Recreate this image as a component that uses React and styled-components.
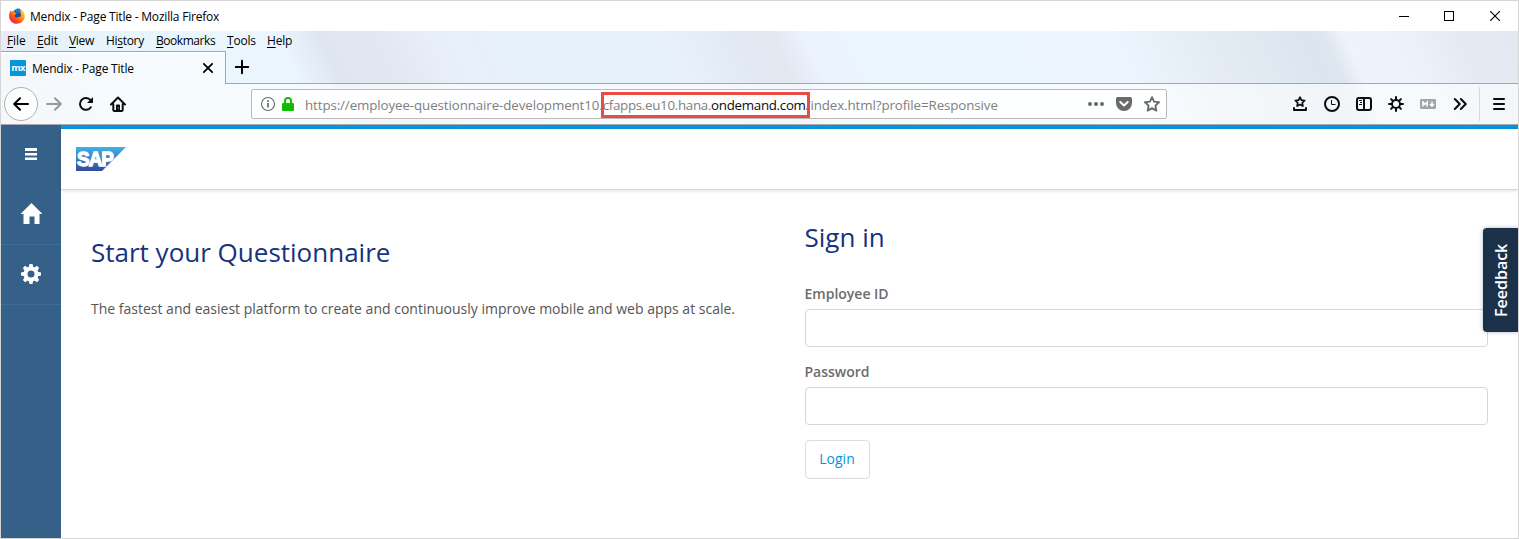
import React from "react";
import styled, { createGlobalStyle, css } from "styled-components";

const GlobalStyle = createGlobalStyle`
  *, *::before, *::after { box-sizing: border-box; }
  body { margin: 0; background: #fff; font-family: "Open Sans", "Liberation Sans", sans-serif; }
  button { font: inherit; margin: 0; padding: 0; background: none; border: 0; color: inherit; }
  svg { display: block; flex: none; }
`;

const Window = styled.div`
  width: 1519px;
  height: 539px;
  display: flex;
  flex-direction: column;
  border: 1px solid #d5d5d6;
  overflow: hidden;
  background: #fff;
`;

const TitleBar = styled.header`
  display: flex;
  align-items: center;
  height: 30px;
  padding-left: 8px;
  font-size: 12px;
  color: #000;
`;

const WindowTitle = styled.span`
  margin-left: 5px;
  white-space: nowrap;
  letter-spacing: -0.2px;
`;

const WindowControls = styled.div`
  display: flex;
  margin-left: auto;
`;

const WindowControl = styled.button`
  display: grid;
  place-items: center;
  width: ${(p) => p.$width || 46}px;
  height: 30px;
`;

const Chrome = styled.div`
  display: flex;
  flex-direction: column;
  height: 94px;
  border-bottom: 1px solid #a6a7b0;
  background: linear-gradient(
    65deg,
    #e8ecf4 0px,
    #e5edf6 50px,
    #e7f4fc 105px,
    #eaf6fe 240px,
    #ebf5fe 290px,
    #dfe6ef 325px,
    #e2e8f1 380px,
    #e8eff9 430px,
    #e6f2fb 520px,
    #e8f1fb 640px,
    #e2e9f3 700px,
    #e2e7f0 735px,
    #ecf3fd 765px,
    #eaf7fe 840px,
    #edf5fe 1040px,
    #e4ebf3 1130px,
    #dce5ee 1222px,
    #dfe6ef 1236px,
    #edf4fb 1254px,
    #ecf2f9 1310px,
    #e3eaf2 1360px,
    #e3e9f1 1413px
  );
`;

const MenuBar = styled.nav`
  display: flex;
  height: 20px;
  padding-left: 6px;
  font-size: 12px;
  line-height: 20px;
  color: #000;
`;

const MenuItem = styled.span`
  width: ${(p) => p.$width}px;
  white-space: nowrap;
  letter-spacing: ${(p) => p.$spacing}px;
  u { text-underline-offset: 2px; text-decoration-skip-ink: none; }
`;

const TabStrip = styled.div`
  display: flex;
  height: 33px;
`;

const Tab = styled.div`
  display: flex;
  align-items: center;
  width: 225px;
  padding: 0 9px;
  font-size: 12px;
  color: #000;
  border-top: 1px solid #a3a6ae;
  border-right: 1px solid #a3a6ae;
  background: linear-gradient(#ffffff 0 2px, rgba(255, 255, 255, 0.6) 2px);
`;

const TabTitle = styled.span`
  flex: 1;
  margin-left: 6px;
  white-space: nowrap;
  letter-spacing: -0.2px;
`;

const Favicon = styled.span`
  display: grid;
  place-items: center;
  width: 16px;
  height: 16px;
  border-radius: 1px;
  background: #0595db;
  color: #fff;
  font: 700 9.5px/14px "Open Sans", sans-serif;
  letter-spacing: -0.6px;
`;

const TabStripRest = styled.div`
  flex: 1;
  display: flex;
  align-items: center;
  padding-left: 8px;
  border-bottom: 1px solid #a3a6ae;
`;

const NavBar = styled.div`
  display: flex;
  align-items: center;
  height: 40px;
  padding-left: 3px;
  background: rgba(255, 255, 255, 0.6);
`;

const BackButton = styled.button`
  display: grid;
  place-items: center;
  width: 34px;
  height: 34px;
  border: 1px solid #aeb0b5;
  border-radius: 50%;
  background: rgba(255, 255, 255, 0.8);
`;

const ToolButton = styled.button`
  display: grid;
  place-items: center;
  width: ${(p) => p.$width || 32}px;
  height: 32px;
  color: ${(p) => p.$color || "#0c0c0d"};
`;

const UrlBar = styled.div`
  display: flex;
  align-items: center;
  width: 916px;
  height: 30px;
  margin-left: 117px;
  padding: 0 0 0 8px;
  border: 1px solid #b8babd;
  border-radius: 2px;
  background: rgba(255, 255, 255, 0.85);
`;

const Url = styled.span`
  flex: 1;
  margin-left: 5px;
  padding-top: 2px;
  font-size: 13.33px;
  line-height: 20px;
  white-space: nowrap;
  letter-spacing: -0.1px;
  color: #7e7e80;
`;

const UrlHighlight = styled.span`
  position: relative;
  letter-spacing: -0.3px;
  &::after {
    content: "";
    position: absolute;
    inset: -4px -4px -4px -2px;
    border: 3px solid #e84c47;
  }
`;

const UrlDomain = styled.span`
  color: #0c0c0d;
`;

const Tools = styled.div`
  display: flex;
  align-items: center;
  margin-left: auto;
  padding-right: 3px;
`;

const ToolDivider = styled.i`
  width: 1px;
  height: 34px;
  margin-left: 3px;
  margin-right: 3px;
  background: #d7dade;
`;

const Page = styled.div`
  position: relative;
  display: flex;
  flex: 1;
  min-height: 0;
`;

const Sidebar = styled.aside`
  display: flex;
  flex-direction: column;
  width: 60px;
  background: #356188;
  color: #fff;
`;

const SidebarItem = styled.a`
  display: grid;
  place-items: center;
  height: 60px;
  padding-bottom: 2px;
  ${(p) => p.$divided && css`
    padding-bottom: 1px;
    border-bottom: 1px solid #3f6d94;
  `}
`;

const Main = styled.main`
  flex: 1;
  border-top: 4px solid #0595db;
`;

const AppHeader = styled.div`
  display: flex;
  align-items: center;
  height: 61px;
  padding: 0 15px;
  border-bottom: 1px solid #d7d7d7;
  box-shadow: 0 1px 3px rgba(0, 0, 0, 0.12);
`;

const Columns = styled.div`
  display: grid;
  grid-template-columns: 713.5px 683.5px;
  padding-left: 30px;
`;

const Intro = styled.section`
  padding-top: 44px;
`;

const SignIn = styled.form`
  padding-top: 29px;
`;

const Heading = styled.h1`
  margin: 0;
  font-size: 26px;
  font-weight: 400;
  line-height: 37px;
  color: #16337b;
  white-space: nowrap;
`;

const Lead = styled.p`
  margin: 28px 0 0;
  font-size: 14px;
  line-height: 20px;
  color: #555;
  white-space: nowrap;
`;

const Label = styled.label`
  display: block;
  margin-top: ${(p) => p.$top}px;
  font-size: 14px;
  font-weight: 600;
  line-height: 20px;
  color: #6c6c6c;
`;

const Input = styled.input`
  display: block;
  width: 100%;
  height: 38px;
  margin-top: 5px;
  border: 1px solid #d7d7d7;
  border-radius: 4px;
  background: #fff;
`;

const LoginButton = styled.button`
  && {
    display: block;
    width: 65px;
    height: 39px;
    margin-top: 15px;
    padding-bottom: 2px;
    border: 1px solid #dcdcdc;
    border-radius: 4px;
    background: #fff;
    color: #0595db;
    font-size: 14px;
    line-height: 20px;
  }
`;

const FeedbackTab = styled.div`
  position: absolute;
  right: 0;
  top: 103px;
  width: 35px;
  height: 104px;
  display: flex;
  align-items: center;
  justify-content: center;
  writing-mode: vertical-rl;
  transform: rotate(180deg);
  border-radius: 0 4px 4px 0;
  background: #1b3149;
  box-shadow: 0 0 4px rgba(27, 49, 73, 0.35);
  color: #fff;
  font-size: 16px;
  font-weight: 600;
`;

const line = { fill: "none", stroke: "currentColor", strokeWidth: 2, strokeLinecap: "round", strokeLinejoin: "round" };

const FirefoxLogo = () => (
  <svg width="16" height="16" viewBox="0 0 16 16">
    <defs>
      <linearGradient id="fox" x1="0.9" y1="0.1" x2="0.2" y2="0.9">
        <stop offset="0" stopColor="#ffe226" />
        <stop offset="0.4" stopColor="#ff9a16" />
        <stop offset="0.75" stopColor="#ff4a22" />
        <stop offset="1" stopColor="#e5204f" />
      </linearGradient>
    </defs>
    <circle cx="8.2" cy="7.6" r="6" fill="#224b9c" />
    <path d="M6.4 1.2C8.2 0 11 .4 12 1.8L10.4 4.6 7 4.4z" fill="#1b7fd6" />
    <path d="M1.4 2.2c.4.8.9 1.200 1.500 1.500C4 3 5 3 5.800 3.300 5.500 4.300 6 5 7.700 5.300 7.500 6.400 6 6.300 5.500 7.300c0 1.700 1.600 2.600 3.200 2.200 1.200-.3 1.900-1 2.900-.7C12.600 6.500 11.500 4.500 10.300 3.200c.8.200 1.300.5 1.700.9C11.900 2.700 11.300 1.500 10.500.4c2.800 1 5.300 4 5.300 7.400 0 4.500-3.500 8-7.900 8C3.500 15.800.1 12.300.1 8 .1 5.800.6 3.600 1.400 2.200z" fill="url(#fox)" />
  </svg>
);

const BackIcon = () => (
  <svg width="16" height="16" viewBox="0 0 16 16">
    <path {...line} d="M15 8H1.500M7 2.200L1.200 8 7 13.800" />
  </svg>
);

const ForwardIcon = () => (
  <svg width="16" height="16" viewBox="0 0 16 16">
    <path {...line} d="M1 8h13.500M9 2.200L14.800 8 9 13.800" />
  </svg>
);

const ReloadIcon = () => (
  <svg width="16" height="16" viewBox="0 0 16 16">
    <path {...line} d="M12.800 11.200A5.900 5.900 0 1 1 12.500 4.200" />
    <path d="M15 1v5.300a.7.7 0 0 1-.7.7H9z" fill="currentColor" />
  </svg>
);

const HomeIcon = () => (
  <svg width="16" height="16" viewBox="0 0 16 16">
    <path {...line} d="M1 8.500L8 1.500l7 7M3.300 8v6.100a.8.800 0 0 0 .8.800h7.800a.8.800 0 0 0 .8-.8V8" />
    <path d="M6 15V9.500a.9.900 0 0 1 .9-.9h2.200a.9.900 0 0 1 .9.900V15z" fill="currentColor" />
    <path d="M8.300 11.500v1" stroke="#fff" strokeWidth="1" />
  </svg>
);

const InfoIcon = () => (
  <svg width="16" height="16" viewBox="0 0 16 16" fill="none" stroke="#6b6b6d">
    <circle cx="8" cy="8" r="6.500" strokeWidth="1.100" />
    <path d="M8 7v4.500M8 4.300v1.700" strokeWidth="1.700" />
  </svg>
);

const LockIcon = () => (
  <svg width="12" height="14" viewBox="0 0 12 14">
    <path d="M3 7V4a3 3 0 0 1 6 0v3" fill="none" stroke="#12bc00" strokeWidth="2" />
    <rect x="0" y="6" width="12" height="8" rx="1" fill="#12bc00" />
  </svg>
);

const DotsIcon = () => (
  <svg width="16" height="16" viewBox="0 0 16 16" fill="#6a6a6c">
    <circle cx="2" cy="8" r="2" />
    <circle cx="8" cy="8" r="2" />
    <circle cx="14" cy="8" r="2" />
  </svg>
);

const PocketIcon = () => (
  <svg width="16" height="16" viewBox="0 0 16 16">
    <path d="M1.800 1h12.400A1.700 1.700 0 0 1 16 2.700V7A8 8 0 0 1 0 7V2.700A1.700 1.700 0 0 1 1.800 1z" fill="#6a6a6c" />
    <path d="M4.300 6L8 9.500 11.700 6" fill="none" stroke="#fff" strokeWidth="2" strokeLinecap="round" strokeLinejoin="round" />
  </svg>
);

const StarIcon = () => (
  <svg width="16" height="16" viewBox="0 0 16 16">
    <path d="M8 1.200l2.100 4.400 4.900.6-3.600 3.400.9 5L8 12.200l-4.300 2.400.9-5L1 6.200l4.900-.6z" fill="none" stroke="#6a6a6c" strokeWidth="1.900" strokeLinejoin="round" />
  </svg>
);

const BookmarkTrayIcon = () => (
  <svg width="16" height="16" viewBox="0 0 16 16" fill="none" stroke="currentColor">
    <path d="M8 1.200l1.400 3 3.300.3-2.400 2.300.6 3.300L8 8.500l-2.900 1.600.6-3.300-2.400-2.300 3.300-.3z" strokeWidth="1.700" strokeLinejoin="round" />
    <path d="M2 12v2h12v-2" strokeWidth="2" strokeLinejoin="round" strokeLinecap="round" />
  </svg>
);

const ClockIcon = () => (
  <svg width="16" height="16" viewBox="0 0 16 16" fill="none" stroke="currentColor">
    <circle cx="8" cy="8" r="7" strokeWidth="2" />
    <path d="M7.500 4v4.500h4" strokeWidth="1" />
  </svg>
);

const SidebarIcon = () => (
  <svg width="16" height="16" viewBox="0 0 16 16" fill="none" stroke="currentColor">
    <rect x="1" y="2" width="14" height="12" rx="2" strokeWidth="2" />
    <path d="M8 2v12" strokeWidth="2" />
    <path d="M3 4.500h3M4 6.500h2M3 8.500h3" strokeWidth="1" />
  </svg>
);

const GearIcon = () => (
  <svg width="16" height="16" viewBox="0 0 16 16" fill="none" stroke="currentColor" strokeWidth="2" strokeLinecap="round">
    <circle cx="8" cy="8" r="4" />
    <path d="M8 1v2M8 13v2M1 8h2M13 8h2M3.100 3.100l1.300 1.300M11.600 11.600l1.300 1.300M12.900 3.100l-1.300 1.300M4.400 11.600l-1.300 1.300" />
  </svg>
);

const MarkdownIcon = () => (
  <svg width="16" height="16" viewBox="0 0 16 16">
    <rect x="0" y="3" width="16" height="10" rx="1.200" fill="#a1a3a8" />
    <path d="M3 10.500V6l2.100 2.400L7.200 6v4.500" fill="none" stroke="#fff" strokeWidth="1.500" />
    <path d="M12 5.500v4M9.900 8l2.100 2.300L14.100 8" fill="none" stroke="#fff" strokeWidth="1.400" />
  </svg>
);

const ChevronsIcon = () => (
  <svg width="16" height="16" viewBox="0 0 16 16">
    <path {...line} d="M2.800 3l5 5-5 5M8.800 3l5 5-5 5" />
  </svg>
);

const MenuIcon = () => (
  <svg width="16" height="16" viewBox="0 0 16 16">
    <path {...line} d="M3 3h10M3 8h10M3 13h10" />
  </svg>
);

const SapLogo = () => (
  <svg width="50" height="24" viewBox="0 0 50 24">
    <defs>
      <linearGradient id="sap" x1="0" y1="0" x2="0" y2="1">
        <stop offset="0" stopColor="#40b1e8" />
        <stop offset="0.5" stopColor="#3a7cc6" />
        <stop offset="1" stopColor="#364a9e" />
      </linearGradient>
    </defs>
    <path d="M0 0h50L26 24H0z" fill="url(#sap)" />
    <text x="1" y="19" textLength="36" lengthAdjust="spacingAndGlyphs" fill="#fff" stroke="#fff" strokeWidth="1.300" fontFamily="Liberation Sans, sans-serif" fontWeight="700" fontSize="20" letterSpacing="-1">SAP</text>
  </svg>
);

const SideMenuIcon = () => (
  <svg width="12" height="12" viewBox="0 0 12 12" fill="#fff">
    <path d="M0 0h12v3H0zM0 5h12v2.500H0zM0 9.500h12V12H0z" />
  </svg>
);

const SideHomeIcon = () => (
  <svg width="22" height="22" viewBox="0 0 22 22" fill="#fff">
    <path d="M11.500 0L22.500 11h-3V21h-5V13.500H9.500V21H3.500V11H0.500z" />
  </svg>
);

const SideGearIcon = () => (
  <svg width="20" height="20" viewBox="-10 -10 20 20">
    <circle r="5.500" fill="none" stroke="#fff" strokeWidth="4" />
    {[0, 45, 90, 135, 180, 225, 270, 315].map((a) => (
      <path key={a} d="M-2.300-6.500L-1.500-10h3L2.300-6.500z" fill="#fff" transform={`rotate(${a})`} />
    ))}
  </svg>
);

const menus = [
  { before: "", key: "F", after: "ile", width: 30, spacing: -0.1 },
  { before: "", key: "E", after: "dit", width: 32, spacing: -0.1 },
  { before: "", key: "V", after: "iew", width: 37, spacing: -0.3 },
  { before: "Hi", key: "s", after: "tory", width: 50, spacing: -0.3 },
  { before: "", key: "B", after: "ookmarks", width: 71, spacing: -0.45 },
  { before: "", key: "T", after: "ools", width: 40, spacing: -0.2 },
  { before: "", key: "H", after: "elp", width: 40, spacing: -0.2 },
];

export default function App() {
  return (
    <>
      <GlobalStyle />
      <Window>
        <TitleBar>
          <FirefoxLogo />
          <WindowTitle>Mendix - Page Title - Mozilla Firefox</WindowTitle>
          <WindowControls>
            <WindowControl aria-label="Minimize" $width={44}>
              <svg width="10" height="10"><path d="M0 5.500h10" stroke="#000" /></svg>
            </WindowControl>
            <WindowControl aria-label="Maximize">
              <svg width="10" height="10"><rect x=".5" y=".5" width="9" height="9" fill="none" stroke="#000" /></svg>
            </WindowControl>
            <WindowControl aria-label="Close">
              <svg width="10" height="10"><path d="M0 0l10 10M10 0L0 10" stroke="#000" strokeWidth="1.100" /></svg>
            </WindowControl>
          </WindowControls>
        </TitleBar>

        <Chrome>
          <MenuBar>
            {menus.map((m) => (
              <MenuItem key={m.key} $width={m.width} $spacing={m.spacing}>{m.before}<u>{m.key}</u>{m.after}</MenuItem>
            ))}
          </MenuBar>
          <TabStrip>
            <Tab>
              <Favicon>mx</Favicon>
              <TabTitle>Mendix - Page Title</TabTitle>
              <svg width="16" height="16"><path {...line} strokeWidth="1.800" d="M3.800 3.800l8.400 8.400M12.200 3.800l-8.400 8.400" /></svg>
            </Tab>
            <TabStripRest>
              <svg width="16" height="16"><path {...line} d="M8 1.800v12.400M1.800 8h12.400" /></svg>
            </TabStripRest>
          </TabStrip>
          <NavBar>
            <BackButton aria-label="Back"><BackIcon /></BackButton>
            <ToolButton $color="#96989c"><ForwardIcon /></ToolButton>
            <ToolButton><ReloadIcon /></ToolButton>
            <ToolButton><HomeIcon /></ToolButton>
            <UrlBar>
              <InfoIcon />
              <ToolButton $width={24}><LockIcon /></ToolButton>
              <Url>
                https://employee-questionnaire-development10.
                <UrlHighlight>cfapps.eu10.hana.<UrlDomain>ondemand.com</UrlDomain></UrlHighlight>
                /index.html?profile=Responsive
              </Url>
              <ToolButton $width={28}><DotsIcon /></ToolButton>
              <ToolButton $width={28}><PocketIcon /></ToolButton>
              <ToolButton $width={28}><StarIcon /></ToolButton>
            </UrlBar>
            <Tools>
              <ToolButton><BookmarkTrayIcon /></ToolButton>
              <ToolButton><ClockIcon /></ToolButton>
              <ToolButton><SidebarIcon /></ToolButton>
              <ToolButton><GearIcon /></ToolButton>
              <ToolButton><MarkdownIcon /></ToolButton>
              <ToolButton><ChevronsIcon /></ToolButton>
              <ToolDivider />
              <ToolButton><MenuIcon /></ToolButton>
            </Tools>
          </NavBar>
        </Chrome>

        <Page>
          <Sidebar>
            <SidebarItem><SideMenuIcon /></SidebarItem>
            <SidebarItem $divided><SideHomeIcon /></SidebarItem>
            <SidebarItem $divided><SideGearIcon /></SidebarItem>
          </Sidebar>
          <Main>
            <AppHeader><SapLogo /></AppHeader>
            <Columns>
              <Intro>
                <Heading>Start your Questionnaire</Heading>
                <Lead>The fastest and easiest platform to create and continuously improve mobile and web apps at scale.</Lead>
              </Intro>
              <SignIn>
                <Heading>Sign in</Heading>
                <Label $top={28} htmlFor="employee">Employee ID</Label>
                <Input id="employee" />
                <Label $top={15} htmlFor="password">Password</Label>
                <Input id="password" type="password" />
                <LoginButton type="button">Login</LoginButton>
              </SignIn>
            </Columns>
          </Main>
          <FeedbackTab>Feedback</FeedbackTab>
        </Page>
      </Window>
    </>
  );
}
